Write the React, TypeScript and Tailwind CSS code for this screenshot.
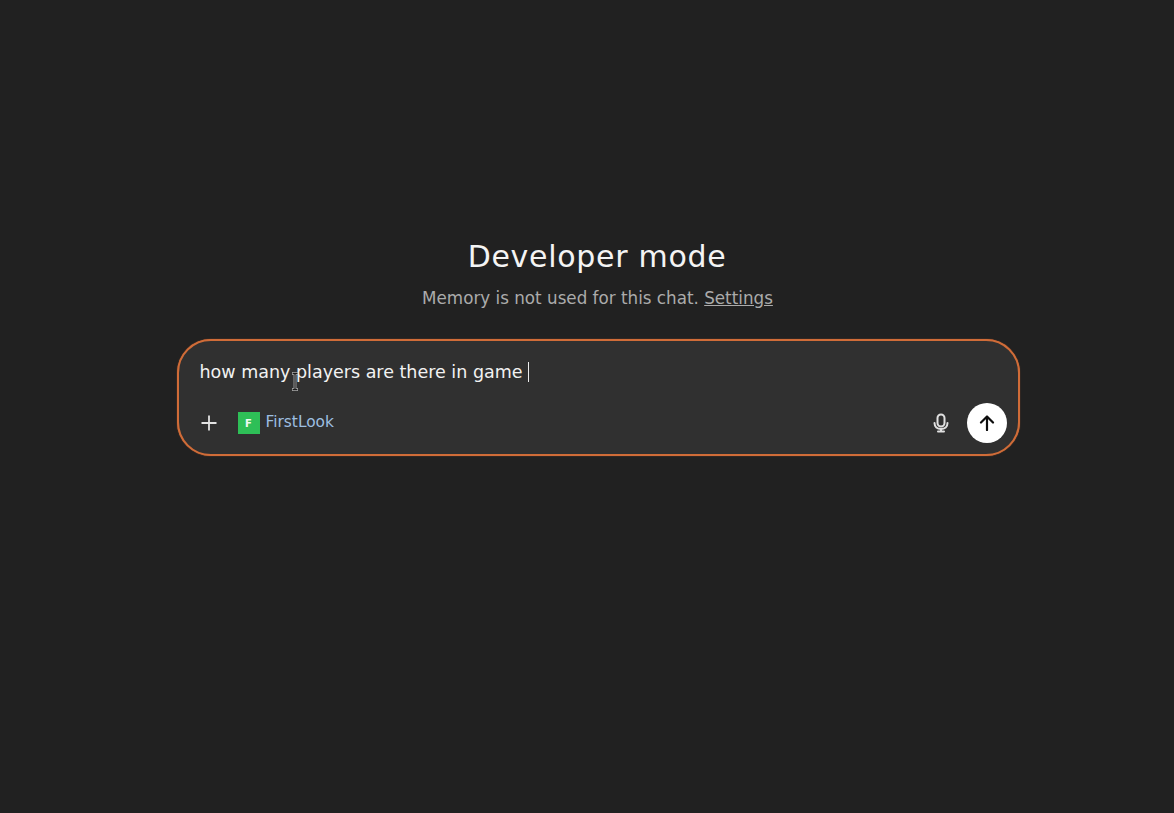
import React from "react";

export default function App() {
  return (
    <div className="h-[813px] w-full bg-[#212121] flex flex-col items-center overflow-hidden pl-[22px] font-['DejaVu_Sans',sans-serif]">
      <h1 className="mt-[238px] ml-[-2px] text-[30px] leading-[38px] font-normal text-[#f4f4f4] tracking-[0.7px]">Developer mode</h1>
      <p className="mt-[10px] ml-[-1px] text-[16.75px] leading-[24px] text-[#ababab]">
        Memory is not used for this chat. <span className="underline">Settings</span>
      </p>
      <div className="relative mt-[29px] w-[843px] h-[117px] rounded-[34px] border-2 border-[#d06c38] shadow-[0_0_1px_#d06c38] bg-[#303030] flex flex-col pl-[21px] pr-[11px]">
        <div className="mt-[19px] h-[24px] flex items-center text-[17.5px] leading-[24px] text-[#f2f2f2]">
          <span className="whitespace-pre">how many players are there in game</span>
          <span className="ml-[5px] w-px h-[20px] bg-[#ececec]" />
        </div>
        <svg className="absolute left-[112px] top-[31px]" width="8" height="20" viewBox="0 0 8 20" fill="none">
          <path d="M1 1.5h6M4 1.5v16M1 17.5h6" stroke="#d8d8d8" strokeWidth="2.6" />
          <path d="M1.5 1.5h5M4 1.5v16M1.5 17.5h5" stroke="#1a1a1a" strokeWidth="1.3" />
        </svg>
        <div className="mt-[19px] flex items-center h-[40px]">
          <svg width="18" height="18" viewBox="0 0 18 18" fill="none" stroke="#e3e3e3" strokeWidth="1.8" className="mr-[20px]">
            <path d="M9 1.5v15M1.5 9h15" />
          </svg>
          <div className="w-[22px] h-[22px] bg-[#2ebf57] flex items-center justify-center text-[10px] font-bold text-[#f0fbf3]">F</div>
          <span className="ml-[6px] text-[15.4px] leading-[20px] text-[#9dbfe0] -mt-[2px]">FirstLook</span>
          <div className="flex-1" />
          <svg width="18" height="20" viewBox="0 0 18 20" fill="none" stroke="#e0e0e0" strokeWidth="2" strokeLinecap="round" className="mr-[17px]">
            <rect x="5.5" y="1.5" width="7" height="12" rx="3.5" />
            <path d="M2.5 10c0 3.8 2.8 6 6.5 6s6.5-2.2 6.5-6" />
            <path d="M9 16v2M6 18.5h6" />
          </svg>
          <div className="w-[40px] h-[40px] rounded-full bg-white flex items-center justify-center">
            <svg width="16" height="16" viewBox="0 0 16 16" fill="none" stroke="#0d0d0d" strokeWidth="2.2" strokeLinecap="round" strokeLinejoin="round">
              <path d="M8 15V1.5M2 7.5 8 1.5l6 6" />
            </svg>
          </div>
        </div>
      </div>
    </div>
  );
}
